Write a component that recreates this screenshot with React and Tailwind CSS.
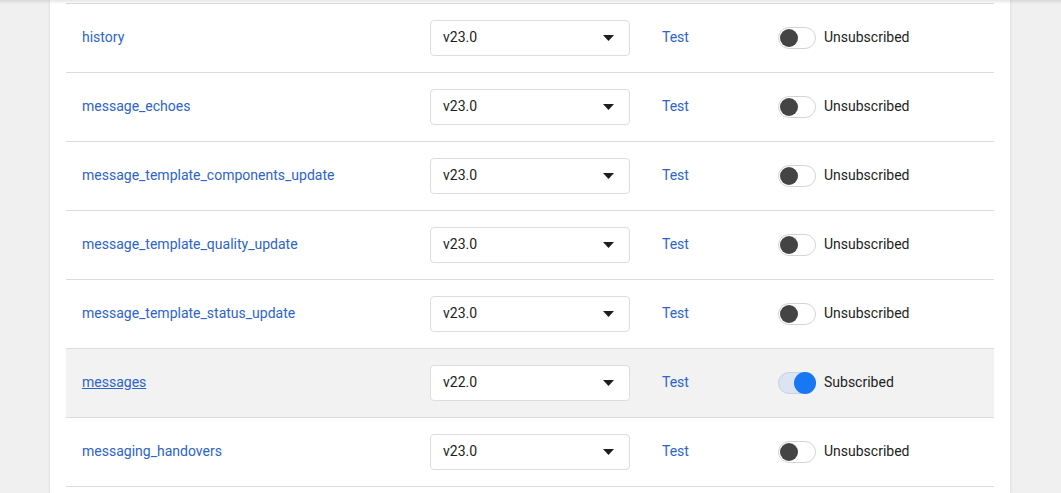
import React from 'react';

const rows = [
  { name: 'history', version: 'v23.0', subscribed: false },
  { name: 'message_echoes', version: 'v23.0', subscribed: false },
  { name: 'message_template_components_update', version: 'v23.0', subscribed: false },
  { name: 'message_template_quality_update', version: 'v23.0', subscribed: false },
  { name: 'message_template_status_update', version: 'v23.0', subscribed: false },
  { name: 'messages', version: 'v22.0', subscribed: true },
  { name: 'messaging_handovers', version: 'v23.0', subscribed: false },
];

// Toggle switch
const Toggle = ({ on }) => (
  <div
    className={`relative w-[38px] h-[22px] rounded-full border ${
      on ? 'bg-[#dbe4f0] border-[#c5d2e3]' : 'bg-white border-[#d4d4d4]'
    }`}
  >
    <div
      className={`absolute rounded-full ${
        on
          ? 'top-[-1px] right-[-1px] w-[22px] h-[22px] bg-[#1877f2]'
          : 'top-[1px] left-[1px] w-[18px] h-[18px] bg-[#444]'
      }`}
    />
  </div>
);

const VersionSelect = ({ value }) => (
  <div className="w-[200px] h-[36px] flex items-center justify-between pl-3 pr-[15px] bg-white border border-[#dadde1] rounded-[4px]">
    <span className="text-[14px] text-[#1c1e21] mb-[2px]">{value}</span>
    <svg width="11" height="6" viewBox="0 0 11 6">
      <path d="M0 0h11L5.5 6z" fill="#1c1e21" />
    </svg>
  </div>
);

const Row = ({ row }) => (
  <div
    className={`flex items-center h-[69px] border-b border-[#dcdcdc] ${
      row.subscribed ? 'bg-[#f2f2f2]' : ''
    }`}
  >
    <div className="w-[364px] pl-4 pb-[2px]">
      <a
        href="#"
        className={`text-[14px] text-[#2d64c8] ${row.subscribed ? 'underline' : 'no-underline'}`}
      >
        {row.name}
      </a>
    </div>
    <div className="w-[232px]">
      <VersionSelect value={row.version} />
    </div>
    <div className="w-[116px] pb-[2px]">
      <a href="#" className="text-[14px] text-[#2d64c8]">Test</a>
    </div>
    <div className="flex items-center gap-2">
      <Toggle on={row.subscribed} />
      <span className="text-[14px] text-[#1c1e21] mb-[2px]">
        {row.subscribed ? 'Subscribed' : 'Unsubscribed'}
      </span>
    </div>
  </div>
);

export default function App() {
  return (
    <div
      className="relative w-[1061px] h-[493px] overflow-hidden bg-[#f0f0f0]"
      style={{ fontFamily: 'Roboto, "Liberation Sans", sans-serif' }}
    >
      {/* shadow from sticky header above */}
      <div className="absolute top-0 left-0 right-0 h-[4px] bg-gradient-to-b from-black/10 to-transparent z-10" />
      <div className="ml-[50px] w-[960px] h-full bg-white shadow-[0_0_3px_rgba(0,0,0,0.12)] px-4 pt-[3px]">
        <div className="border-t border-[#dcdcdc]">
          {rows.map((r) => (
            <Row key={r.name} row={r} />
          ))}
        </div>
      </div>
    </div>
  );
}
